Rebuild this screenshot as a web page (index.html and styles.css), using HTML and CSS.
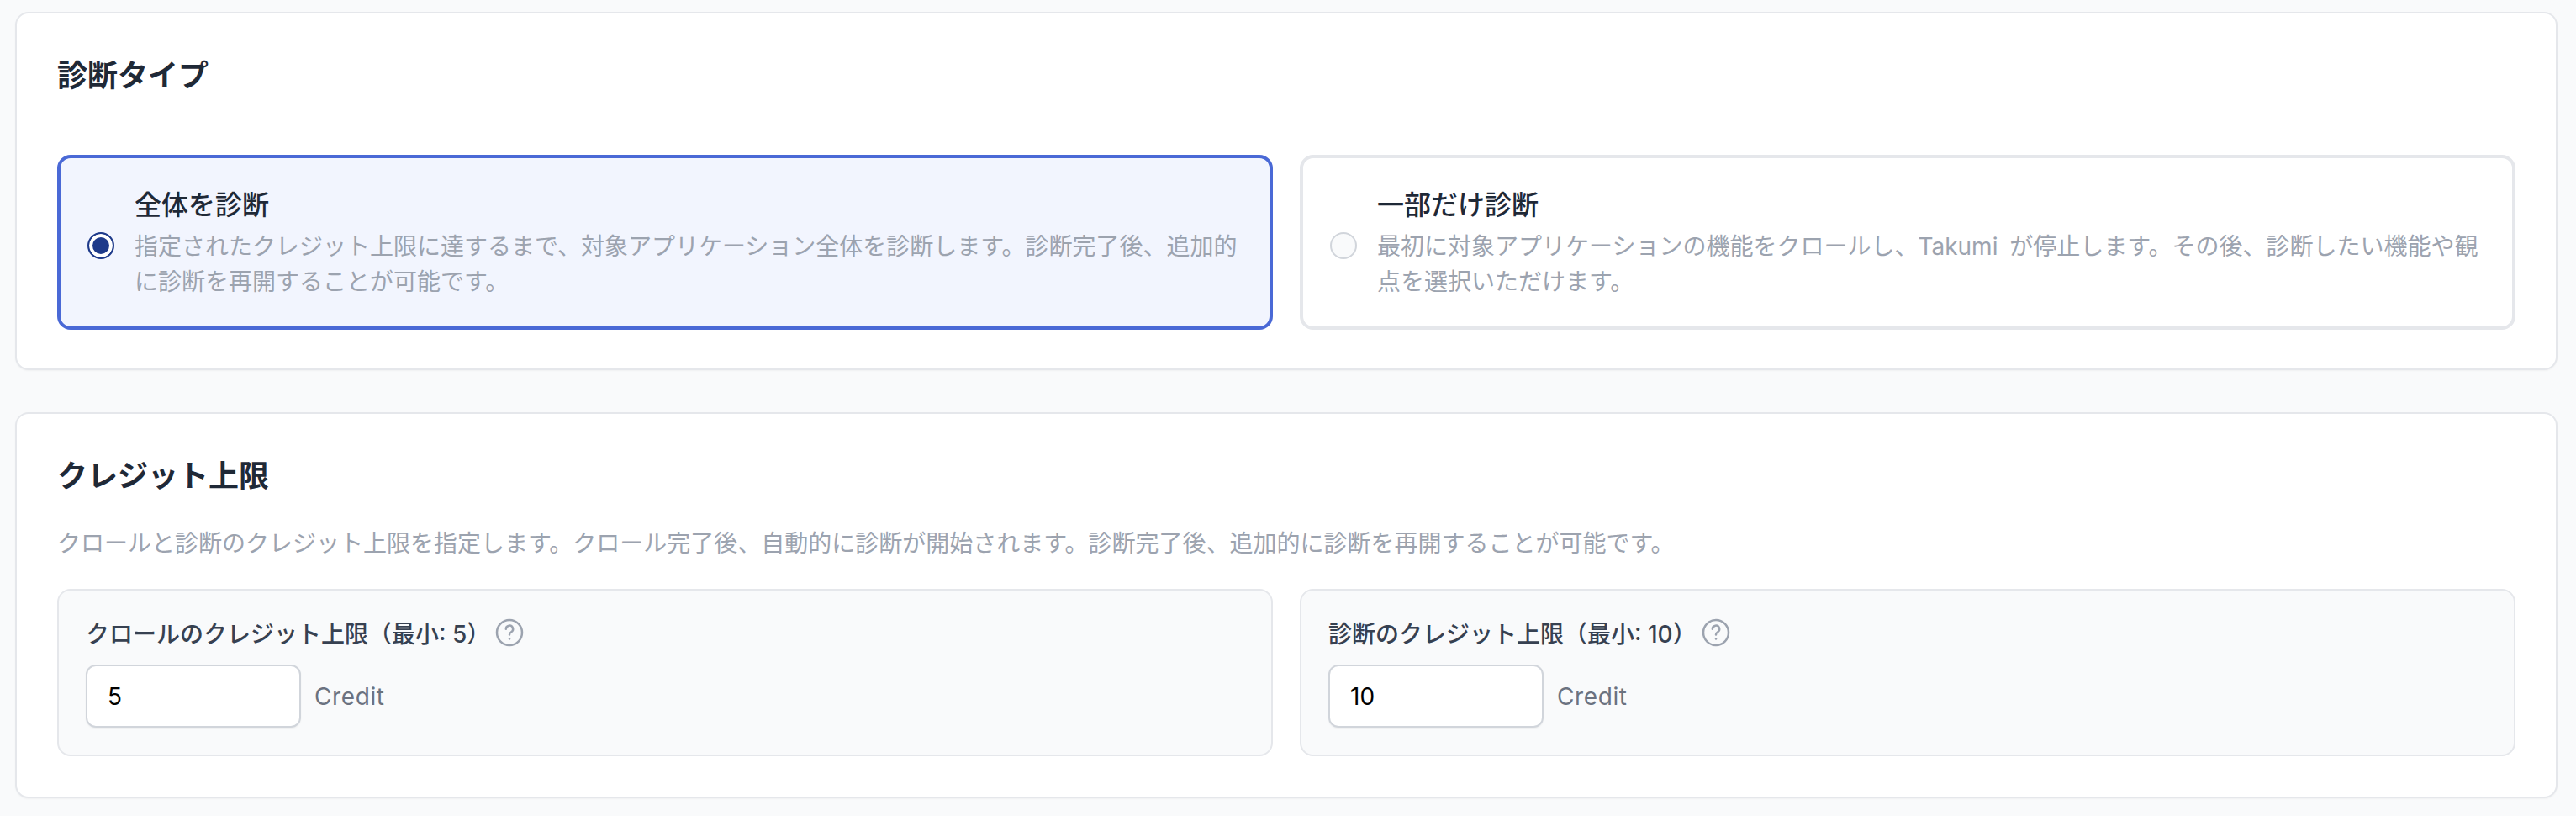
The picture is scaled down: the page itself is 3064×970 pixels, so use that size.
FILE: index.html
```html
<!DOCTYPE html>
<html lang="ja">

<head>
    <meta charset="UTF-8">
    <meta name="viewport" content="width=device-width, initial-scale=1.0">
    <title>診断設定</title>
    <link rel="stylesheet" href="styles.css">
</head>

<body>
    <section class="card card-type">
        <h2 class="card-title">診断タイプ</h2>
        <div class="option-grid">
            <label class="option option-selected">
                <span class="radio radio-checked"></span>
                <span class="option-text">
                    <span class="option-title">全体を診断</span>
                    <span class="option-desc">指定されたクレジット上限に達するまで、対象アプリケーション全体を診断します。診断完了後、追加的に診断を再開することが可能です。</span>
                </span>
            </label>
            <label class="option">
                <span class="radio"></span>
                <span class="option-text">
                    <span class="option-title">一部だけ診断</span>
                    <span class="option-desc">最初に対象アプリケーションの機能をクロールし、Takumi が停止します。その後、診断したい機能や観点を選択いただけます。</span>
                </span>
            </label>
        </div>
    </section>

    <section class="card card-credit">
        <h2 class="card-title">クレジット上限</h2>
        <p class="card-desc">クロールと診断のクレジット上限を指定します。クロール完了後、自動的に診断が開始されます。診断完了後、追加的に診断を再開することが可能です。</p>
        <div class="limit-grid">
            <div class="limit-box">
                <div class="limit-label">
                    <span>クロールのクレジット上限（最小: 5）</span>
                    <svg class="help-icon" viewBox="0 0 24 24" fill="none" stroke="currentColor" stroke-width="1.5" stroke-linecap="round" stroke-linejoin="round">
                        <circle cx="12" cy="12" r="9"></circle>
                        <path d="M9.5 9.5a2.5 2.5 0 1 1 3.6 2.2c-.7.4-1.1.9-1.1 1.8"></path>
                        <path d="M12 16.5h.01"></path>
                    </svg>
                </div>
                <div class="limit-row">
                    <input class="limit-input" type="text" value="5">
                    <span class="limit-unit">Credit</span>
                </div>
            </div>
            <div class="limit-box">
                <div class="limit-label">
                    <span>診断のクレジット上限（最小: 10）</span>
                    <svg class="help-icon" viewBox="0 0 24 24" fill="none" stroke="currentColor" stroke-width="1.5" stroke-linecap="round" stroke-linejoin="round">
                        <circle cx="12" cy="12" r="9"></circle>
                        <path d="M9.5 9.5a2.5 2.5 0 1 1 3.6 2.2c-.7.4-1.1.9-1.1 1.8"></path>
                        <path d="M12 16.5h.01"></path>
                    </svg>
                </div>
                <div class="limit-row">
                    <input class="limit-input" type="text" value="10">
                    <span class="limit-unit">Credit</span>
                </div>
            </div>
        </div>
    </section>
</body>

</html>
```

FILE: styles.css
```css
* {
    box-sizing: border-box;
}

body {
    font-family: Inter, "Noto Sans CJK JP", sans-serif;
    margin: 0;
    padding: 14px 22px 21px 18px;
    background-color: #f9fafb;
    color: #1f2937;
}

.card {
    background-color: #fff;
    border: 2px solid #e5e7eb;
    border-radius: 16px;
    padding: 48px;
    box-shadow: 0 1px 2px rgba(0, 0, 0, 0.04);
}

.card-type {
    padding-bottom: 46px;
    margin-bottom: 50px;
}

.card-title {
    margin: 0;
    font-size: 36px;
    line-height: 52px;
    font-weight: 700;
}

.card-type .card-title {
    margin-bottom: 68px;
}

.card-desc {
    margin: 33px 0;
    font-size: 28px;
    line-height: 42px;
    color: #9ca3af;
}

.option-grid,
.limit-grid {
    display: grid;
    grid-template-columns: 1fr 1fr;
    gap: 32px;
}

.option {
    display: flex;
    gap: 24px;
    padding: 32px;
    border: 4px solid #e5e7eb;
    border-radius: 16px;
}

.option-selected {
    border-color: #4a69d6;
    background-color: #f2f5fe;
}

.radio {
    flex: none;
    width: 32px;
    height: 32px;
    margin-top: 56px;
    border: 2px solid #d1d5db;
    border-radius: 50%;
    background-color: #f9fafb;
}

.radio-checked {
    border-color: #1e3a8a;
    background-color: #1e3a8a;
    box-shadow: inset 0 0 0 4px #fff;
}

.option-text {
    display: flex;
    flex-direction: column;
    gap: 4px;
}

.option-title {
    font-size: 32px;
    line-height: 48px;
    font-weight: 500;
}

.option-desc {
    font-size: 28px;
    line-height: 42px;
    word-spacing: 6px;
    color: #9ca3af;
}

.limit-box {
    padding: 32px;
    border: 2px solid #e5e7eb;
    border-radius: 16px;
    background-color: #f9fafb;
}

.limit-label {
    display: flex;
    align-items: center;
    gap: 3px;
    height: 36px;
    margin-bottom: 20px;
    font-size: 28px;
    font-weight: 500;
    color: #374151;
}

.help-icon {
    width: 40px;
    height: 40px;
    color: #9ca3af;
}

.limit-row {
    display: flex;
    align-items: center;
    gap: 16px;
}

.limit-input {
    width: 256px;
    height: 75px;
    padding: 0 24px;
    border: 2px solid #d1d5db;
    border-radius: 12px;
    background-color: #fff;
    font-family: inherit;
    font-size: 28px;
    color: #000;
    box-shadow: 0 1px 2px rgba(0, 0, 0, 0.05);
}

.limit-unit {
    font-size: 28px;
    letter-spacing: 0.6px;
    color: #6b7280;
}
```
